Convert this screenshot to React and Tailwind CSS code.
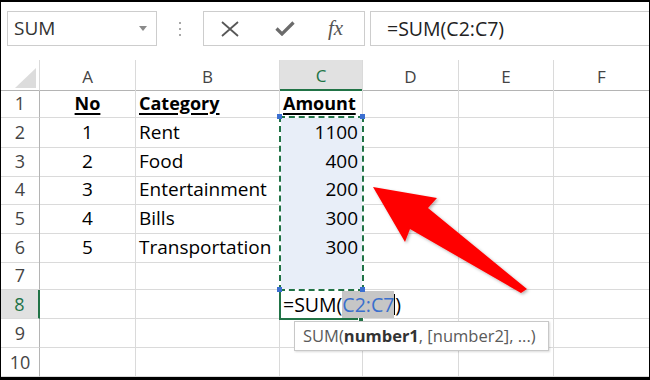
import React from "react";

const COLS = "grid grid-cols-[39px_96px_144px_83px_96px_95px_1fr]";
const LINE = "border-[#dadada]";

const rows = [
  { n: 1, h: "h-[29px]", a: "No", b: "Category", c: "Amount", head: true },
  { n: 2, h: "h-[29px]", a: "1", b: "Rent", c: "1100" },
  { n: 3, h: "h-[28px]", a: "2", b: "Food", c: "400" },
  { n: 4, h: "h-[29px]", a: "3", b: "Entertainment", c: "200" },
  { n: 5, h: "h-[29px]", a: "4", b: "Bills", c: "300" },
  { n: 6, h: "h-[28px]", a: "5", b: "Transportation", c: "300" },
  { n: 7, h: "h-[29px]", a: "", b: "", c: "" },
  { n: 8, h: "h-[29px]", a: "", b: "", c: "", active: true },
  { n: 9, h: "h-[29px]", a: "", b: "", c: "" },
  { n: 10, h: "flex-1", a: "", b: "", c: "" },
];

function ColHeader({ label, active, last }) {
  return (
    <div
      className={
        "flex items-center justify-center pt-[3px] text-[17px] border-b " +
        (last ? "" : "border-r border-r-[#dadada] ") +
        (active
          ? "bg-[#e1e1e1] border-b-2 border-b-[#217346] text-[#217346]"
          : "border-b-[#b4b4b4] text-[#444]")
      }
    >
      {label}
    </div>
  );
}

function Row({ r }) {
  const blue = r.n >= 2 && r.n <= 7;
  const size = r.head ? "text-[18px] font-bold underline decoration-2 underline-offset-[3px]" : "text-[19px]";
  return (
    <div className={COLS + " " + r.h}>
      <div
        className={
          "flex items-center justify-center text-[18px] border-b border-b-[#dadada] " +
          (r.active
            ? "bg-[#e1e1e1] text-[#217346] border-r-2 border-r-[#217346]"
            : "border-r border-r-[#b4b4b4] text-[#444]")
        }
      >
        {r.n}
      </div>
      <div className={"flex items-center justify-center text-black border-r border-b " + LINE + " " + size}>
        {r.a}
      </div>
      <div className={"flex items-center pl-[3px] text-black whitespace-nowrap border-r border-b " + LINE + " " + size}>
        {r.b}
      </div>
      <div
        className={
          "flex items-center text-black border-r border-b " +
          LINE +
          " " +
          size +
          " " +
          (r.head ? "pl-[3px]" : "justify-end pr-[4px]") +
          (blue ? " bg-[#e8eef8]" : "")
        }
      >
        {r.c}
      </div>
      <div className={"border-r border-b " + LINE}></div>
      <div className={"border-r border-b " + LINE}></div>
      <div className={"border-b " + LINE}></div>
    </div>
  );
}

export default function App() {
  return (
    <div className="relative w-[650px] h-[380px] overflow-hidden bg-white border-t-2 border-b-[3px] border-x border-black flex flex-col font-['Open_Sans',sans-serif]">
      {/* Toolbar */}
      <div className="h-[58px] shrink-0 flex items-start pt-[9px]">
        <div className="ml-[6px] w-[150px] h-[35px] border border-[#cdcdcd] flex items-center justify-between pl-[6px] pr-[9px]">
          <span className="text-[19px] text-[#333]">SUM</span>
          <svg width="8" height="5" viewBox="0 0 8 5">
            <path d="M0 0H8L4 5Z" fill="#8a8a8a" />
          </svg>
        </div>
        <div className="w-[46px] h-[35px] flex flex-col items-center justify-center gap-[4px]">
          <div className="w-[2px] h-[2px] bg-[#a8a8a8]" />
          <div className="w-[2px] h-[2px] bg-[#a8a8a8]" />
          <div className="w-[2px] h-[2px] bg-[#a8a8a8]" />
        </div>
        <div className="w-[162px] h-[35px] border border-[#cdcdcd] flex items-center pl-[17px]">
          <svg width="18" height="16" viewBox="0 0 18 16">
            <path d="M1 1L17 15M17 1L1 15" stroke="#575757" strokeWidth="1.8" fill="none" />
          </svg>
          <svg className="ml-[36px]" width="20" height="15" viewBox="0 0 20 15">
            <path d="M1.5 7.5L7 13L18.5 1.5" stroke="#6b6b6b" strokeWidth="3.2" fill="none" strokeLinejoin="miter" />
          </svg>
          <span className="ml-[33px] text-[21px] italic text-[#555] font-['Liberation_Serif',serif] leading-none">
            fx
          </span>
        </div>
        <div className="ml-[5px] flex-1 h-[35px] border border-r-0 border-[#cdcdcd] flex items-center pl-[16px]">
          <span className="text-[19.5px] text-[#222]">=SUM(C2:C7)</span>
        </div>
      </div>

      {/* Column headers */}
      <div className={COLS + " h-[29px] shrink-0"}>
        <div className="relative border-r border-r-[#dadada] border-b border-b-[#b4b4b4]">
          <svg className="absolute right-[3px] bottom-[2px]" width="21" height="20" viewBox="0 0 21 20">
            <path d="M21 0V20H0Z" fill="#dcdcdc" />
          </svg>
        </div>
        <ColHeader label="A" />
        <ColHeader label="B" />
        <ColHeader label="C" active />
        <ColHeader label="D" />
        <ColHeader label="E" />
        <ColHeader label="F" last />
      </div>

      {/* Rows */}
      <div className="flex-1 flex flex-col">
        {rows.map((r) => (
          <Row key={r.n} r={r} />
        ))}
      </div>

      {/* Active cell border C8 */}
      <div className="absolute left-[278px] top-[287px] w-[84px] h-[31px] border-2 border-[#217346]" />
      <div className="absolute left-[357px] top-[314px] w-[6px] h-[6px] bg-[#217346] border border-white" />

      {/* In-cell edit text */}
      <div className="absolute left-[280px] top-[289px] h-[27px] w-[124px] bg-white flex items-stretch text-[19.5px] text-black">
        <span className="flex items-center pl-[2px]">=SUM(</span>
        <span className="flex items-center bg-[#c6c6c6] text-[#3a6fcd]">C2:C7</span>
        <span className="w-[1px] bg-black my-[3px]" />
        <span className="flex items-center">)</span>
      </div>

      {/* Marquee around C2:C7 */}
      <div className="absolute left-[278px] top-[114px] w-[85px] h-[175px] border-2 border-white" />
      <div className="absolute left-[278px] top-[114px] w-[85px] h-[175px] border-2 border-dashed border-[#217346]" />
      <div className="absolute left-[276px] top-[112px] w-[5px] h-[5px] bg-[#3b6fd1]" />
      <div className="absolute left-[359px] top-[112px] w-[5px] h-[5px] bg-[#3b6fd1]" />
      <div className="absolute left-[276px] top-[285px] w-[5px] h-[5px] bg-[#3b6fd1]" />
      <div className="absolute left-[359px] top-[285px] w-[5px] h-[5px] bg-[#3b6fd1]" />

      {/* Tooltip */}
      <div className="absolute left-[293px] top-[319px] w-[255px] h-[30px] bg-white border border-[#c8c8c8] shadow-[1px_1px_2px_rgba(0,0,0,0.15)] flex items-center pl-[8px] text-[16.5px] text-[#5a5a5a] whitespace-nowrap">
        SUM(<b className="font-bold text-[#333]">number1</b>, [number2], ...)
      </div>

      {/* Red arrow */}
      <svg className="absolute left-[-1px] top-[-2px] pointer-events-none" width="650" height="380" viewBox="0 0 650 380">
        <defs>
          <filter id="sh" x="-20%" y="-20%" width="140%" height="140%">
            <feDropShadow dx="1.5" dy="1.5" stdDeviation="1.5" floodColor="#000" floodOpacity="0.3" />
          </filter>
        </defs>
        <polygon
          points="373,187 437,198 428,208 527,289 521,293 410,229 405,242"
          fill="#ff0000"
          filter="url(#sh)"
        />
      </svg>
    </div>
  );
}
